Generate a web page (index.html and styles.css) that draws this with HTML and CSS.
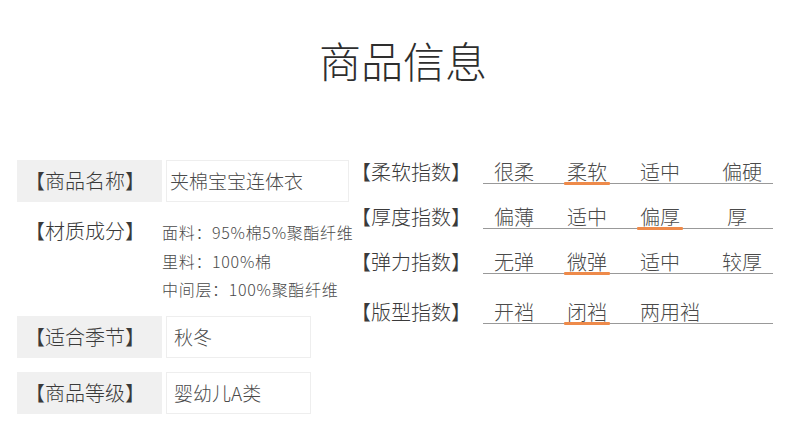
FILE: index.html
```html
<!DOCTYPE html>
<html lang="zh-CN">
<head>
<meta charset="utf-8">
<title>商品信息</title>
<link rel="stylesheet" href="styles.css">
</head>
<body>
<div class="page">
  <h1 class="title">商品信息</h1>
  <div class="main">
    <div class="left">
      <div class="row row-name">
        <div class="label label-box">【商品名称】</div>
        <div class="value value-wide">夹棉宝宝连体衣</div>
      </div>
      <div class="row row-material">
        <div class="label">【材质成分】</div>
        <div class="material">
          <div>面料：95%棉5%聚酯纤维</div>
          <div>里料：100%棉</div>
          <div>中间层：100%聚酯纤维</div>
        </div>
      </div>
      <div class="row row-season">
        <div class="label label-box">【适合季节】</div>
        <div class="value value-narrow">秋冬</div>
      </div>
      <div class="row row-grade">
        <div class="label label-box">【商品等级】</div>
        <div class="value value-narrow">婴幼儿A类</div>
      </div>
    </div>
    <div class="right">
      <div class="idx idx-1">
        <div class="idx-label">【柔软指数】</div>
        <div class="opts">
          <span class="opt">很柔</span>
          <span class="opt on">柔软</span>
          <span class="opt">适中</span>
          <span class="opt">偏硬</span>
        </div>
      </div>
      <div class="idx idx-2">
        <div class="idx-label">【厚度指数】</div>
        <div class="opts">
          <span class="opt">偏薄</span>
          <span class="opt">适中</span>
          <span class="opt on">偏厚</span>
          <span class="opt opt-single">厚</span>
        </div>
      </div>
      <div class="idx idx-3">
        <div class="idx-label">【弹力指数】</div>
        <div class="opts">
          <span class="opt">无弹</span>
          <span class="opt on">微弹</span>
          <span class="opt">适中</span>
          <span class="opt">较厚</span>
        </div>
      </div>
      <div class="idx idx-4">
        <div class="idx-label">【版型指数】</div>
        <div class="opts">
          <span class="opt">开裆</span>
          <span class="opt on">闭裆</span>
          <span class="opt">两用裆</span>
        </div>
      </div>
    </div>
  </div>
</div>
</body>
</html>
```

FILE: styles.css
```css
* { box-sizing: border-box; }
html, body { margin: 0; padding: 0; background: #fff; }
body {
  font-family: "Noto Sans CJK SC", "Noto Sans", sans-serif;
  font-weight: 300;
  color: #3a3a3a;
}
.page { width: 790px; height: 448px; overflow: hidden; }
.title {
  margin: 35px 0 0;
  padding-left: 16px;
  font-size: 42px;
  line-height: 50px;
  font-weight: 300;
  text-align: center;
  color: #2e2e2e;
}
.main {
  display: flex;
  margin-top: 75px;
  padding-left: 17px;
}
.left { width: 334px; display: flex; flex-direction: column; }
.row { display: flex; gap: 4px; }
.label {
  width: 145px;
  flex: none;
  padding-right: 9px;
  font-size: 20px;
  text-align: center;
  color: #3a3a3a;
}
.label-box {
  height: 42px;
  line-height: 42px;
  background: #f0f0f0;
}
.value {
  height: 42px;
  line-height: 40px;
  border: 1px solid #eee;
  font-size: 19px;
  color: #4a4a4a;
  padding-left: 3px;
}
.value-wide { width: 183px; }
.value-narrow { width: 145px; padding-left: 7px; }
.row-material { margin-top: 15px; gap: 0; }
.row-material .label { line-height: 28px; }
.material {
  white-space: nowrap;
  font-size: 16px;
  letter-spacing: 0.7px;
  line-height: 28.5px;
  color: #4a4a4a;
  margin-top: 1px;
}
.row-season { margin-top: 12px; }
.row-grade { margin-top: 14px; }

.right { display: flex; flex-direction: column; }
.idx { display: flex; }
.idx-2, .idx-3 { margin-top: 21px; }
.idx-4 { margin-top: 26px; }
.idx-label {
  width: 132px;
  font-size: 20px;
  line-height: 23px;
  color: #3a3a3a;
}
.opts {
  width: 290px;
  height: 24px;
  border-bottom: 1px solid #999;
  display: grid;
  grid-template-columns: 73px 73px 82px 1fr;
  padding-left: 11px;
  font-size: 20px;
  line-height: 23px;
  color: #4a4a4a;
}
.opt { position: relative; justify-self: start; }
.opt-single { padding-left: 5px; }
.opt.on::after {
  content: "";
  position: absolute;
  left: -3px;
  right: -3px;
  bottom: -2px;
  height: 3px;
  border-radius: 1px;
  background: #ee8a4a;
}
```
